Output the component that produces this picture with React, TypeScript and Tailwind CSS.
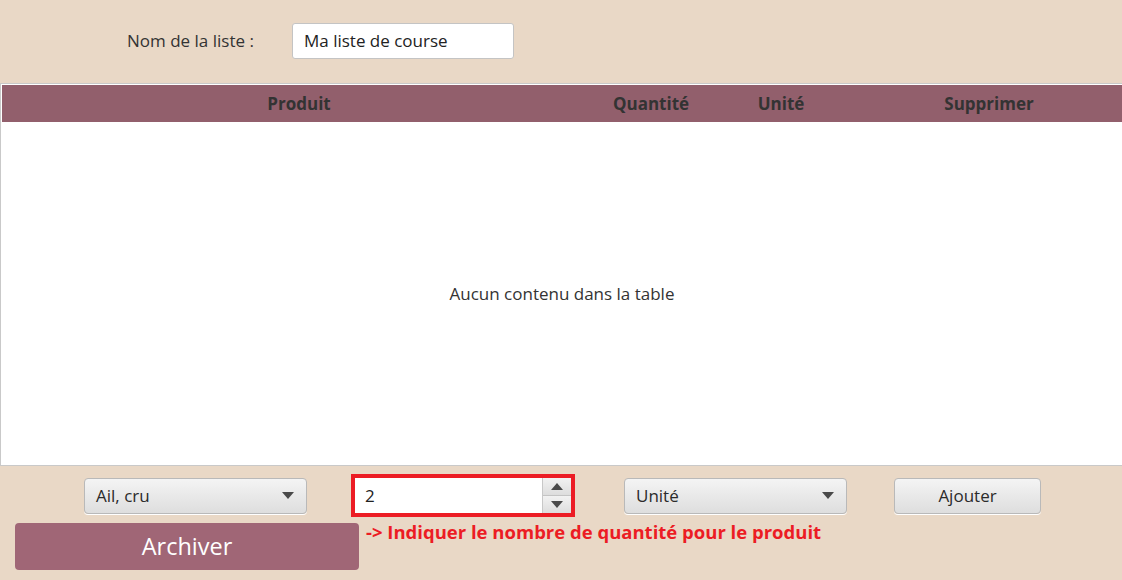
import React from "react";

const font = { fontFamily: '"Open Sans", "Noto Sans", sans-serif' };

function Combo({ label }: { label: string }) {
  return (
    <div className="flex h-[36px] w-[223px] items-center justify-between rounded-[4px] border border-[#b9b9b9] bg-gradient-to-b from-[#f4f4f4] to-[#dedede] pl-[11px] pr-[12px] text-[17px] text-[#2b2b2b] shadow-[0_1px_0_#ffffff]">
      <span>{label}</span>
      <svg width="12" height="7" viewBox="0 0 12 7">
        <path d="M0 0 L12 0 L6 7 Z" fill="#4a4a4a" />
      </svg>
    </div>
  );
}

export default function App() {
  return (
    <div style={font} className="flex h-[580px] w-[1122px] flex-col overflow-hidden bg-[#e9d8c6] text-[#2b2b2b]">
      {/* top row */}
      <div className="flex items-center pt-[23px]">
        <div className="w-[292px] pl-[127px] text-[17px] text-[#333333]">Nom de la liste :</div>
        <div className="flex h-[36px] w-[222px] items-center rounded-[3px] border border-[#c4c4c4] bg-white pl-[11px] text-[17px] text-[#222222]">
          Ma liste de course
        </div>
      </div>

      {/* table */}
      <div className="mt-[24px] flex h-[383px] w-[1124px] flex-col border border-[#c9c9c9] bg-white p-px">
        <div className="flex h-[37px] shrink-0 items-center bg-[#925f6c] text-[17px] font-bold text-[#333333]">
          <div className="w-[594px] text-center">Produit</div>
          <div className="w-[110px] text-center">Quantité</div>
          <div className="w-[150px] text-center">Unité</div>
          <div className="w-[266px] text-center">Supprimer</div>
        </div>
        <div className="flex flex-1 items-center justify-center pt-[1px] text-[17px] text-[#333333]">
          Aucun contenu dans la table
        </div>
      </div>

      {/* controls row */}
      <div className="mt-[8px] flex items-center">
        <div className="ml-[84px]">
          <Combo label="Ail, cru" />
        </div>
        <div className="ml-[44px] flex h-[43px] w-[224px] border-[4px] border-[#ec1c24] bg-white">
          <div className="flex flex-1 items-center pl-[10px] text-[17px] text-[#222222]">2</div>
          <div className="flex w-[29px] flex-col border-l border-[#c8c8c8]">
            <div className="flex flex-1 items-center justify-center border-b border-[#c4c4c4] bg-gradient-to-b from-[#f2f2f2] to-[#dddddd]">
              <svg width="12" height="7" viewBox="0 0 12 7">
                <path d="M0 7 L12 7 L6 0 Z" fill="#4a4a4a" />
              </svg>
            </div>
            <div className="flex flex-1 items-center justify-center bg-gradient-to-b from-[#f2f2f2] to-[#dddddd]">
              <svg width="12" height="7" viewBox="0 0 12 7">
                <path d="M0 0 L12 0 L6 7 Z" fill="#4a4a4a" />
              </svg>
            </div>
          </div>
        </div>
        <div className="ml-[49px]">
          <Combo label="Unité" />
        </div>
        <button className="ml-[47px] flex h-[36px] w-[147px] items-center justify-center rounded-[4px] border border-[#b9b9b9] bg-gradient-to-b from-[#f4f4f4] to-[#dedede] text-[17px] text-[#2b2b2b] shadow-[0_1px_0_#ffffff]">
          Ajouter
        </button>
      </div>

      {/* archive row */}
      <div className="mt-[6px] flex items-start">
        <button className="ml-[15px] flex h-[47px] w-[344px] items-center justify-center rounded-[4px] bg-[#a06676] text-[23.5px] text-white">
          Archiver
        </button>
        <span className="ml-[7px] mt-[-5px] text-[18.5px] font-bold text-[#ec1c24]">
          -&gt; Indiquer le nombre de quantité pour le produit
        </span>
      </div>
    </div>
  );
}
